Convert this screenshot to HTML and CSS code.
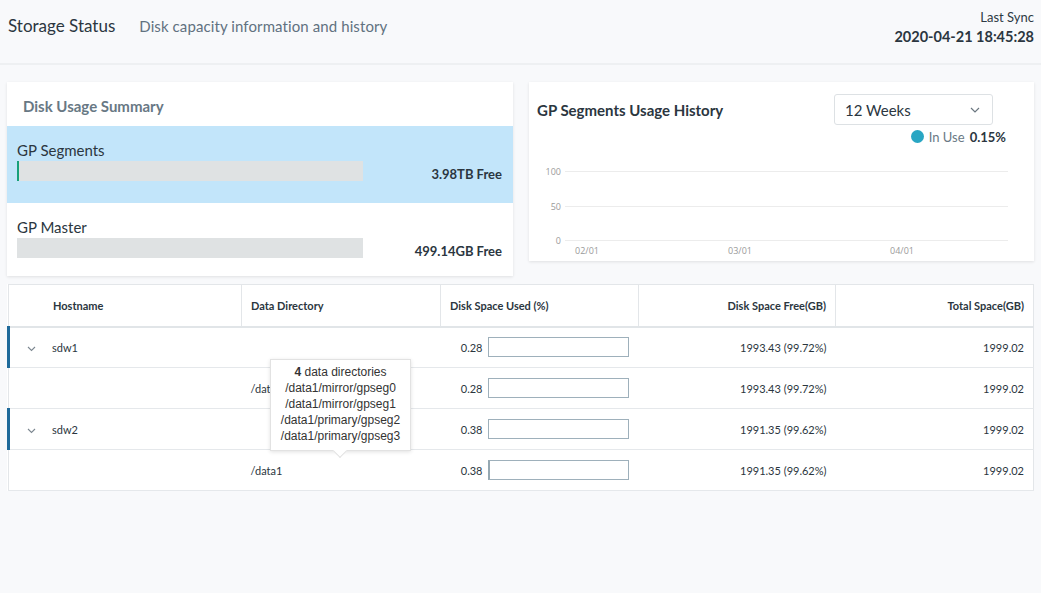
FILE: index.html
```html
<!DOCTYPE html>
<html>
<head>
<meta charset="utf-8">
<link rel="stylesheet" href="styles.css">
</head>
<body>
<header class="page-header">
  <div class="heading">
    <h1 class="title">Storage Status</h1>
    <span class="subtitle">Disk capacity information and history</span>
  </div>
  <div class="sync">
    <div class="sync-label">Last Sync</div>
    <div class="sync-time">2020-04-21 18:45:28</div>
  </div>
</header>

<main class="content">
  <div class="cards">
    <section class="card summary">
      <h2 class="card-title muted">Disk Usage Summary</h2>
      <div class="usage-row active">
        <div class="usage-name">GP Segments</div>
        <div class="usage-line">
          <div class="usage-bar"><div class="usage-fill" style="width:0.5%"></div></div>
          <div class="usage-free">3.98TB Free</div>
        </div>
      </div>
      <div class="usage-row">
        <div class="usage-name">GP Master</div>
        <div class="usage-line">
          <div class="usage-bar"></div>
          <div class="usage-free">499.14GB Free</div>
        </div>
      </div>
    </section>

    <section class="card history">
      <div class="history-head">
        <h2 class="card-title">GP Segments Usage History</h2>
        <div class="select">
          <span>12 Weeks</span>
          <svg class="chev" width="10" height="6" viewBox="0 0 10 6"><path d="M1 1l4 4 4-4" fill="none" stroke="#6b7780" stroke-width="1.2"/></svg>
        </div>
      </div>
      <div class="legend">
        <span class="dot"></span>
        <span class="legend-label">In Use</span>
        <span class="legend-value">0.15%</span>
      </div>
      <svg class="chart" width="505" height="117" viewBox="0 0 505 117">
        <g stroke="#ececec" stroke-width="1">
          <line x1="36" y1="27.5" x2="479" y2="27.5"/>
          <line x1="36" y1="62.5" x2="479" y2="62.5"/>
          <line x1="36" y1="96.5" x2="479" y2="96.5"/>
        </g>
        <g class="axis" text-anchor="end">
          <text x="32" y="30.5">100</text>
          <text x="32" y="65.5">50</text>
          <text x="32" y="99.5">0</text>
        </g>
        <g class="axis" text-anchor="middle">
          <text x="58" y="110">02/01</text>
          <text x="211" y="110">03/01</text>
          <text x="373" y="110">04/01</text>
        </g>
      </svg>
    </section>
  </div>

  <div class="table-wrap">
    <table class="hosts">
      <thead>
        <tr>
          <th class="c-host">Hostname</th>
          <th class="c-dir">Data Directory</th>
          <th class="c-used">Disk Space Used (%)</th>
          <th class="c-free num">Disk Space Free(GB)</th>
          <th class="c-total num">Total Space(GB)</th>
        </tr>
      </thead>
      <tbody>
        <tr class="host">
          <td class="c-host"><span class="toggle"><svg width="9" height="6" viewBox="0 0 9 6"><path d="M1 1l3.5 3.5L8 1" fill="none" stroke="#7c8790" stroke-width="1.1"/></svg></span>sdw1</td>
          <td></td>
          <td class="c-usedcell"><div class="used"><span>0.28</span><span class="used-box"></span></div></td>
          <td class="num">1993.43 (99.72%)</td>
          <td class="num">1999.02</td>
        </tr>
        <tr>
          <td></td>
          <td>/data1</td>
          <td class="c-usedcell"><div class="used"><span>0.28</span><span class="used-box"></span></div></td>
          <td class="num">1993.43 (99.72%)</td>
          <td class="num">1999.02</td>
        </tr>
        <tr class="host">
          <td class="c-host"><span class="toggle"><svg width="9" height="6" viewBox="0 0 9 6"><path d="M1 1l3.5 3.5L8 1" fill="none" stroke="#7c8790" stroke-width="1.1"/></svg></span>sdw2</td>
          <td></td>
          <td class="c-usedcell"><div class="used"><span>0.38</span><span class="used-box"></span></div></td>
          <td class="num">1991.35 (99.62%)</td>
          <td class="num">1999.02</td>
        </tr>
        <tr>
          <td></td>
          <td>/data1</td>
          <td class="c-usedcell"><div class="used"><span>0.38</span><span class="used-box edge"></span></div></td>
          <td class="num">1991.35 (99.62%)</td>
          <td class="num">1999.02</td>
        </tr>
      </tbody>
    </table>
    <div class="tooltip">
      <div><b>4</b> data directories</div>
      <div>/data1/mirror/gpseg0</div>
      <div>/data1/mirror/gpseg1</div>
      <div>/data1/primary/gpseg2</div>
      <div>/data1/primary/gpseg3</div>
    </div>
  </div>
</main>
</body>
</html>
```

FILE: styles.css
```css
* { box-sizing: border-box; }

html, body {
  margin: 0;
  padding: 0;
  background: #f8f9fb;
  font-family: Lato, "Open Sans", "Liberation Sans", sans-serif;
  color: #2e3a44;
}

.page-header {
  height: 65px;
  display: flex;
  justify-content: space-between;
  align-items: flex-start;
  padding: 0 7px 0 8px;
  border-bottom: 2px solid #eef0f2;
}

.heading {
  display: flex;
  align-items: baseline;
  padding-top: 15px;
}

.title {
  margin: 0;
  font-size: 17px;
  font-weight: 400;
  color: #2b3640;
}

.subtitle {
  margin-left: 24px;
  font-size: 15px;
  letter-spacing: 0.1px;
  color: #617180;
}

.sync {
  text-align: right;
  padding-top: 8px;
}

.sync-label {
  font-size: 13px;
  line-height: 18px;
  color: #2e3a44;
}

.sync-time {
  font-size: 14.5px;
  line-height: 22px;
  font-weight: 700;
  color: #2b3640;
}

.content {
  padding: 17px 7px 0 7px;
}

.cards {
  display: flex;
  align-items: flex-start;
  gap: 16px;
}

.card {
  background: #fff;
  box-shadow: 0 1px 3px rgba(0, 0, 0, 0.10);
}

.summary {
  width: 506px;
}

.card-title {
  margin: 0;
  font-size: 15px;
  font-weight: 700;
  color: #2b3640;
}

.card-title.muted {
  color: #687884;
  padding: 0 16px;
  height: 44px;
  line-height: 48px;
}

.usage-row {
  padding: 14px 11px 0 10px;
  height: 77px;
}

.usage-row + .usage-row {
  height: 73px;
}

.usage-row.active {
  background: #c2e5fa;
}

.usage-name {
  font-size: 15px;
  line-height: 21px;
  color: #2b3640;
}

.usage-line {
  display: flex;
  align-items: flex-start;
  justify-content: space-between;
}

.usage-bar {
  width: 346px;
  height: 20px;
  background: #dfe2e3;
}

.usage-fill {
  height: 100%;
  min-width: 2px;
  border-left: 2px solid #18a07a;
}

.usage-free {
  font-size: 13px;
  font-weight: 700;
  margin-top: 5px;
  color: #2b3640;
}

.history {
  width: 505px;
  height: 179px;
}

.history-head {
  display: flex;
  align-items: center;
  justify-content: space-between;
  padding: 12px 41px 0 8px;
}

.select {
  width: 159px;
  height: 31px;
  border: 1px solid #dde1e4;
  border-radius: 3px;
  display: flex;
  align-items: center;
  justify-content: space-between;
  padding: 0 12px 0 10px;
  font-size: 15px;
  color: #2b3640;
}

.legend {
  display: flex;
  justify-content: flex-end;
  align-items: center;
  gap: 5px;
  height: 19px;
  padding-right: 28px;
  margin-top: 2px;
  font-size: 13px;
}

.dot {
  width: 13px;
  height: 13px;
  border-radius: 50%;
  background: #29a6c3;
}

.legend-label {
  color: #6a7985;
}

.legend-value {
  font-weight: 700;
  color: #2b3640;
}

.chart {
  display: block;
  margin-top: -2px;
}

.axis {
  font-family: "Open Sans", sans-serif;
  font-size: 9px;
  fill: #9a9a9a;
}

.table-wrap {
  position: relative;
  margin-top: 8px;
}

.hosts {
  width: 100%;
  border-collapse: collapse;
  background: #fff;
  border: 1px solid #e3e6e9;
  font-size: 11px;
  color: #2b3640;
  table-layout: fixed;
}

.hosts th {
  height: 42px;
  font-weight: 700;
  text-align: left;
  padding: 0 9px;
  border-left: 1px solid #e3e6e9;
  border-bottom: 2px solid #e1e5e8;
}

.hosts th:first-child {
  border-left: none;
  padding-left: 44px;
}

.hosts .c-host { width: 233px; }
.hosts .c-dir { width: 199px; }
.hosts .c-used { width: 198px; }
.hosts .c-free { width: 197px; }

.hosts td {
  height: 41px;
  padding: 0 9px;
  border-bottom: 1px solid #e5e8eb;
}

.hosts td.c-usedcell {
  padding-right: 10px;
}

.hosts .num {
  text-align: right;
}

.hosts tr.host td:first-child {
  border-left: 3px solid #1e6a9a;
  padding-left: 17px;
}

.toggle {
  display: inline-block;
  width: 25px;
}

.used {
  display: flex;
  justify-content: flex-end;
  align-items: center;
  gap: 5px;
}

.used-box {
  width: 141px;
  height: 20px;
  border: 1px solid #9eb0bb;
}

.used-box.edge {
  border-left: 2px solid #95a8b2;
}

.tooltip {
  position: absolute;
  left: 263px;
  top: 75px;
  width: 141px;
  padding: 4px 0 6px;
  background: #fff;
  border: 1px solid #e2e2e2;
  box-shadow: 0 1px 4px rgba(0, 0, 0, 0.12);
  font-family: "Liberation Sans", Arial, sans-serif;
  font-size: 12px;
  line-height: 16px;
  text-align: center;
  color: #333;
}

.tooltip::after {
  content: "";
  position: absolute;
  left: 64px;
  bottom: -6px;
  width: 9px;
  height: 9px;
  background: #fff;
  border-right: 1px solid #e2e2e2;
  border-bottom: 1px solid #e2e2e2;
  transform: rotate(45deg);
}
```
